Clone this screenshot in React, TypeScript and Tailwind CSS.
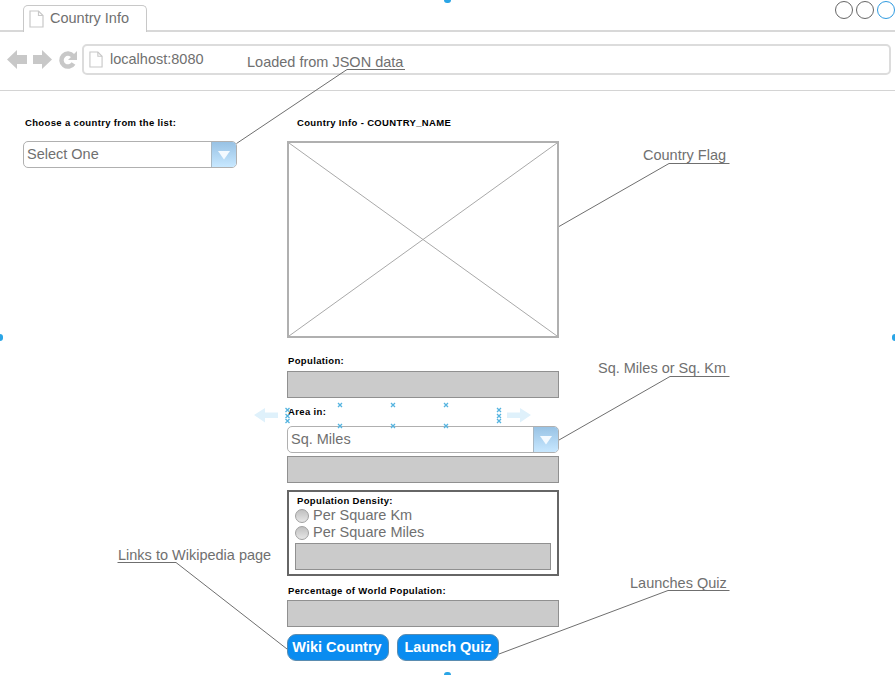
const sans = { fontFamily: '"Liberation Sans", Arial, sans-serif' }

function PageIcon({ className }: { className: string }) {
    return (
        <svg className={className} viewBox="0 0 15 18" fill="#fff" stroke="#c8c8c8" strokeWidth="1.2">
            <path d="M1 1h8.500L14 5.500V17H1z" />
            <path d="M9.500 1v4.500H14" fill="none" />
        </svg>
    )
}

function NavIcons() {
    return (
        <svg width="74" height="22" viewBox="0 0 74 22" className="shrink-0">
            <path d="M0 10.500L10 1v5h10v9H10v5z" fill="#c8c8c8" />
            <path d="M45 10.500L35 1v5h-9v9h9v5z" fill="#c8c8c8" />
            <path d="M66.500 14.500a6.500 6.500 0 1 1-0.500-7.500" fill="none" stroke="#c8c8c8" strokeWidth="4.500" />
            <path d="M70 2v9h-9z" fill="#c8c8c8" />
        </svg>
    )
}

function Field({ className = "" }: { className?: string }) {
    return <div className={`h-[27px] bg-[#cbcbcb] border border-[#909090] ${className}`} />
}

function Label({ children, className = "" }: { children: string; className?: string }) {
    return <p className={`text-[9.5px] leading-[11px] font-bold text-black tracking-[0.35px] ${className}`}>{children}</p>
}

function Select({ value, className = "" }: { value: string; className?: string }) {
    return (
        <div className={`h-[27px] flex rounded-[5px] border border-[#b0b0b0] bg-white overflow-hidden ${className}`}>
            <span className="flex-1 pl-[3px] text-[14.500px] leading-[25px] text-[#707070]">{value}</span>
            <span className="w-[25px] flex items-center justify-center border-l border-[#a8b8c4] bg-gradient-to-b from-[#98c2e4] to-[#c8e8ff]">
                <svg width="14" height="10" viewBox="0 0 14 10">
                    <path d="M1 1h12L7 9.500z" fill="#f4faff" />
                </svg>
            </span>
        </div>
    )
}

function Radio({ label }: { label: string }) {
    return (
        <div className="flex items-center gap-[4px] h-[17px]">
            <span className="w-[14px] h-[14px] rounded-full border border-[#a0a0a0] bg-gradient-to-b from-[#c0c0c0] to-[#e6e6e6]" />
            <span className="text-[14.500px] leading-[17px] text-[#707070]">{label}</span>
        </div>
    )
}

function Note({ text, className }: { text: string; className: string }) {
    return <span className={`absolute text-[14.500px] leading-[16px] text-[#707070] whitespace-nowrap ${className}`}>{text}</span>
}

function Callouts() {
    return (
        <svg className="absolute inset-0 pointer-events-none" width="895" height="675" viewBox="0 0 895 675" fill="none" stroke="#6f6f6f">
            <path d="M236.500 143.500L347 69.500h58" />
            <path d="M559 226.500L669 163.500h60.500" />
            <path d="M559 440L670 376.500h59.500" />
            <path d="M287 649L176 562.500h-58.500" />
            <path d="M499 654L668 590.500h61.500" />
        </svg>
    )
}

function Cross({ x, y }: { x: number; y: number }) {
    return <path d={`M${x - 2} ${y - 2}l4 4m0-4l-4 4`} />
}

// selection marks left over from the wireframe tool
function Handles() {
    const marks = [
        [340, 405], [393, 405], [446, 405],
        [340, 426], [393, 426], [446, 426],
        [287.5, 410], [287.5, 416], [287.5, 421],
        [499, 410], [499, 416], [499, 421],
    ]
    return (
        <>
            <svg className="absolute inset-0 pointer-events-none" width="895" height="675" viewBox="0 0 895 675">
                <path d="M254 415l11-7v4.500h13v5.500h-13v4.500z" fill="#dff1fb" />
                <path d="M531 415l-11-7v4.500h-13v5.500h13v4.500z" fill="#dff1fb" />
                <g stroke="#55b4e0" strokeWidth="1.300" fill="none">
                    {marks.map(([x, y]) => (
                        <Cross key={`${x}-${y}`} x={x} y={y} />
                    ))}
                </g>
            </svg>
            <span className="absolute left-[444px] -top-[3px] w-[7px] h-[6px] rounded-full bg-[#2aa5e6]" />
            <span className="absolute left-[444px] top-[672px] w-[7px] h-[6px] rounded-full bg-[#2aa5e6]" />
            <span className="absolute -left-[3px] top-[334px] w-[6px] h-[7px] rounded-full bg-[#2aa5e6]" />
            <span className="absolute -right-[3px] top-[334px] w-[6px] h-[7px] rounded-full bg-[#2aa5e6]" />
        </>
    )
}

export default function App() {
    return (
        <div className="relative w-[895px] h-[675px] overflow-hidden bg-white" style={sans}>
            <header className="h-[91px] border-b border-[#d4d4d4] flex flex-col">
                <div className="h-[32px] border-b-2 border-[#d8d8d8] flex items-end justify-between pl-[23px]">
                    <div className="h-[27px] w-[124px] -mb-[2px] flex items-center gap-[6px] pl-[5px] pb-[1px] bg-white border border-b-0 border-[#c8c8c8] rounded-t-[5px]">
                        <PageIcon className="w-[15px] h-[18px]" />
                        <span className="text-[14.500px] text-[#707070]">Country Info</span>
                    </div>
                    <div className="self-start flex gap-[3px] pt-[1px]">
                        <span className="w-[18px] h-[18px] rounded-full border border-[#666]" />
                        <span className="w-[18px] h-[18px] rounded-full border border-[#666]" />
                        <span className="w-[18px] h-[18px] rounded-full border border-[#2f9be0]" />
                    </div>
                </div>
                <div className="flex-1 flex items-center pl-[7px] pr-[4px] gap-[1px] pb-[3px]">
                    <NavIcons />
                    <div className="flex-1 h-[31px] flex items-center gap-[7px] pl-[5px] border-2 border-[#dcdcdc] rounded-[5px]">
                        <PageIcon className="w-[14px] h-[17px]" />
                        <span className="text-[14.500px] text-[#707070]">localhost:8080</span>
                    </div>
                </div>
            </header>

            <main className="flex pt-[26px]">
                <section className="w-[287px] pl-[23px]">
                    <Label className="pl-[2px] mb-[13px]">Choose a country from the list:</Label>
                    <Select value="Select One" className="w-[214px]" />
                </section>

                <section className="w-[272px]">
                    <Label className="pl-[10px] mb-[13px]">Country Info - COUNTRY_NAME</Label>
                    <div className="h-[197px] border-2 border-[#b0b0b0]">
                        <svg className="w-full h-full" viewBox="0 0 268 193" preserveAspectRatio="none" stroke="#a9a9a9">
                            <path d="M0 0L268 193M268 0L0 193" />
                        </svg>
                    </div>
                    <Label className="pl-[1px] mt-[17px] mb-[5px]">Population:</Label>
                    <Field />
                    <Label className="pl-[1px] mt-[8px] mb-[9px]">Area in:</Label>
                    <Select value="Sq. Miles" />
                    <Field className="mt-[3px]" />
                    <div className="mt-[7px] h-[86px] border-2 border-[#666] px-[6px] pt-[3px]">
                        <Label className="pl-[2px] mb-[1px]">Population Density:</Label>
                        <Radio label="Per Square Km" />
                        <Radio label="Per Square Miles" />
                        <Field className="mt-[2px]" />
                    </div>
                    <Label className="pl-[1px] mt-[9px] mb-[4px]">Percentage of World Population:</Label>
                    <Field />
                    <div className="flex gap-[8px] mt-[7px]">
                        <button className="w-[102px] h-[27px] pr-[2px] rounded-[9px] border border-[#5a8cb0] bg-[#0a8cf0] text-white text-[14.500px] font-bold">Wiki Country</button>
                        <button className="w-[102px] h-[27px] rounded-[9px] border border-[#5a8cb0] bg-[#0a8cf0] text-white text-[14.500px] font-bold">Launch Quiz</button>
                    </div>
                </section>
            </main>

            <Callouts />
            <Handles />
            <Note text="Loaded from JSON data" className="left-[247px] top-[54px]" />
            <Note text="Country Flag" className="left-[643px] top-[147px]" />
            <Note text="Sq. Miles or Sq. Km" className="left-[598px] top-[360px]" />
            <Note text="Links to Wikipedia page" className="left-[118px] top-[547px]" />
            <Note text="Launches Quiz" className="left-[630px] top-[575px]" />
        </div>
    )
}
